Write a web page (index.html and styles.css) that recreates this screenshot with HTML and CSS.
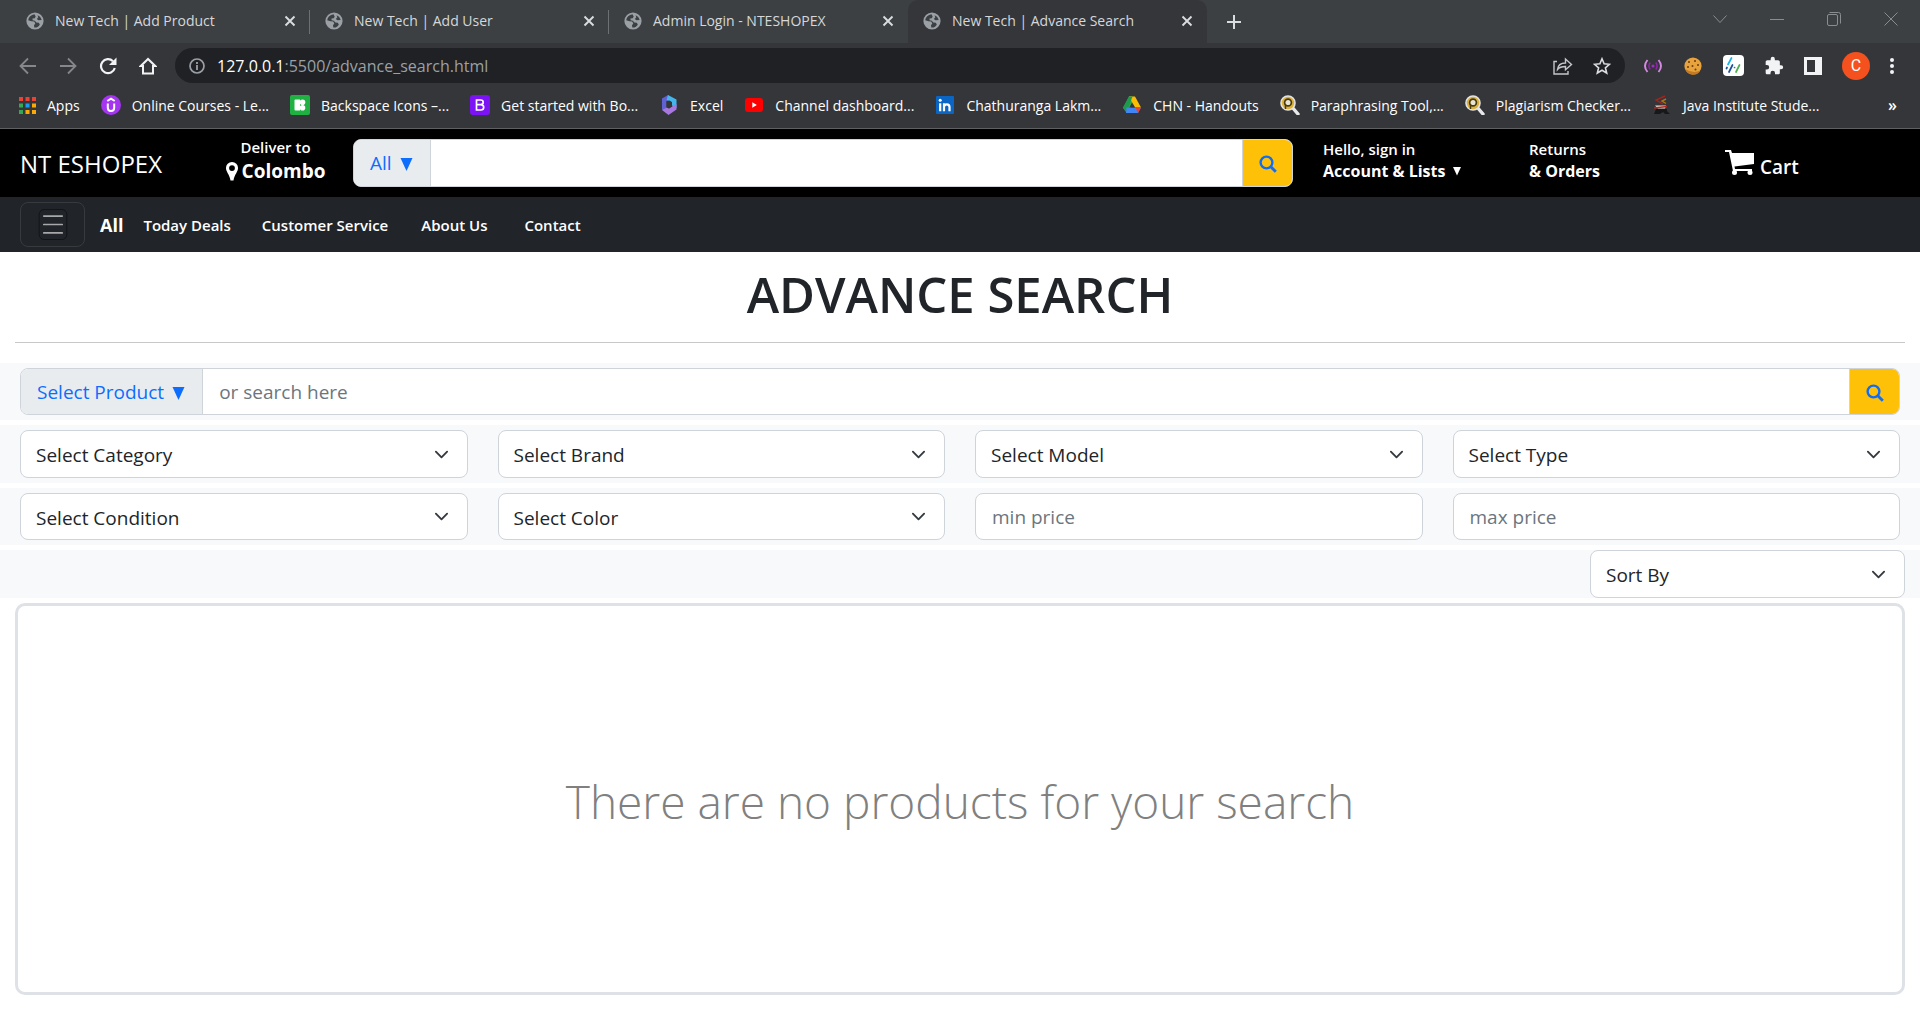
FILE: index.html
```html
<!DOCTYPE html>
<html lang="en">
<head>
<meta charset="utf-8">
<meta name="viewport" content="width=device-width, initial-scale=1">
<title>New Tech | Advance Search</title>
<link rel="stylesheet" href="styles.css">
</head>
<body>
<svg class="sprite" aria-hidden="true">
  <symbol id="globe" viewBox="0 0 18 18">
    <circle cx="9" cy="9" r="8.6" fill="#9aa0a6"/>
    <path d="M8.5 2.3C5 2.8 2.600 5.200 2.200 8.200L5.600 9.300 8.200 9.600 9.300 11.600 8 13.300 8.300 15.600C11 15.800 13 14.500 13.800 12.500L12.800 10.800 10.400 10.600 8.800 8.700 6.600 8.300 6.500 6.600 8.800 6.200 9.700 4.400Z" fill="#3c4043"/>
    <path d="M11.500 3.200L12.300 5.300 10.800 7.100 12.500 8.300 15.600 7.900C15.200 5.700 13.600 4 11.500 3.200Z" fill="#3c4043"/>
  </symbol>
  <symbol id="cross" viewBox="0 0 12 12"><path d="M1.500 1.500l9 9M10.500 1.500l-9 9" stroke="#dadce0" stroke-width="1.900" fill="none"/></symbol>
  <symbol id="lens" viewBox="0 0 20 20">
    <path d="M12 12l6 7" stroke="#e8e8e8" stroke-width="3.400" stroke-linecap="round"/>
    <circle cx="8" cy="8" r="7" fill="#dcb13a" stroke="#e4e4e4" stroke-width="1.600"/>
    <circle cx="8" cy="7.500" r="3.400" fill="#e8e4d4" stroke="#4a3a10" stroke-width="1.700"/>
    <path d="M5.500 9v5" stroke="#4a3a10" stroke-width="1.500"/>
  </symbol>
  <symbol id="search" viewBox="0 0 18 18"><circle cx="7.500" cy="7.500" r="5.900" fill="none" stroke="#0d6efd" stroke-width="2.400"/><path d="M11.800 11.800l5 5" stroke="#0d6efd" stroke-width="2.800"/></symbol>
</svg>

<div class="browser">
  <div class="tabs">
    <div class="tab"><svg class="i18"><use href="#globe"/></svg><span>New Tech | Add Product</span><button class="bare" aria-label="Close tab"><svg class="i12"><use href="#cross"/></svg></button></div>
    <div class="tab"><svg class="i18"><use href="#globe"/></svg><span>New Tech | Add User</span><button class="bare" aria-label="Close tab"><svg class="i12"><use href="#cross"/></svg></button></div>
    <div class="tab last"><svg class="i18"><use href="#globe"/></svg><span>Admin Login - NTESHOPEX</span><button class="bare" aria-label="Close tab"><svg class="i12"><use href="#cross"/></svg></button></div>
    <div class="tab active"><svg class="i18"><use href="#globe"/></svg><span>New Tech | Advance Search</span><button class="bare" aria-label="Close tab"><svg class="i12"><use href="#cross"/></svg></button></div>
    <button class="bare new-tab" aria-label="New tab"><svg width="16" height="16" viewBox="0 0 16 16"><path d="M8 1v14M1 8h14" stroke="#dadce0" stroke-width="2"/></svg></button>
    <div class="window-buttons">
      <button class="bare" aria-label="Search tabs"><svg width="14" height="14" viewBox="0 0 14 14"><path d="M.5 3.500L7 10.500l6.500-7" fill="none" stroke="#8a8d90"/></svg></button>
      <button class="bare" aria-label="Minimize"><svg width="14" height="14" viewBox="0 0 14 14"><path d="M0 7.500h14" stroke="#8a8d90"/></svg></button>
      <button class="bare" aria-label="Restore"><svg width="14" height="14" viewBox="0 0 14 14"><rect x=".5" y="2.500" width="10" height="11" rx="1.500" fill="none" stroke="#8a8d90"/><path d="M2.500.500h9q2 0 2 2v9" fill="none" stroke="#8a8d90"/></svg></button>
      <button class="bare" aria-label="Close window"><svg width="14" height="14" viewBox="0 0 14 14"><path d="M.5.500l13 13M13.500.500l-13 13" stroke="#8a8d90"/></svg></button>
    </div>
  </div>

  <div class="toolbar">
    <div class="nav-buttons">
      <button class="bare" aria-label="Back"><svg width="18" height="18" viewBox="0 0 18 18"><path d="M17 9H2M9 1.500L1.500 9 9 16.500" fill="none" stroke="#85878a" stroke-width="1.800"/></svg></button>
      <button class="bare" aria-label="Forward"><svg width="18" height="18" viewBox="0 0 18 18"><path d="M1 9h15M9 1.500L16.500 9 9 16.500" fill="none" stroke="#85878a" stroke-width="1.800"/></svg></button>
      <button class="bare" aria-label="Reload"><svg width="18" height="18" viewBox="0 0 18 18"><path d="M15.800 11A7 7 0 1 1 14 4.200" fill="none" stroke="#f1f3f4" stroke-width="2.200"/><path d="M17.500.500v7.500H10z" fill="#f1f3f4"/></svg></button>
      <button class="bare" aria-label="Home"><svg width="18" height="18" viewBox="0 0 18 18"><path d="M9 2L1.800 9H4v7.500h10V9h2.200z" fill="none" stroke="#f1f3f4" stroke-width="2"/></svg></button>
    </div>
    <div class="omnibox">
      <svg width="16" height="16" viewBox="0 0 16 16"><circle cx="8" cy="8" r="7" fill="none" stroke="#9aa0a6" stroke-width="1.700"/><path d="M8 7v5M8 4v2" stroke="#9aa0a6" stroke-width="1.800"/></svg>
      <span class="url">127.0.0.1<span class="path">:5500/advance_search.html</span></span>
      <button class="bare" aria-label="Share"><svg width="20" height="18" viewBox="0 0 20 18"><path d="M4 4.500H1v12.500h14v-3M4.500 12.500c.500-4.500 3.500-6.500 8-6.500V2l6 5.500-6 5.300V9.500c-3.500 0-6 .500-8 3z" fill="none" stroke="#c4c7c9" stroke-width="1.400"/></svg></button>
      <button class="bare" aria-label="Bookmark this page"><svg width="18" height="18" viewBox="0 0 18 18"><path d="M9 1.800l2.100 5 5.400.500-4.100 3.500 1.300 5.200L9 13.200 4.300 16l1.300-5.200L1.500 7.300l5.400-.500z" fill="none" stroke="#dadce0" stroke-width="1.600"/></svg></button>
    </div>
    <div class="extensions">
      <button class="bare" aria-label="Recorder"><svg width="20" height="16" viewBox="0 0 20 16" fill="none"><path d="M4.500 2Q-.500 8 4.500 14M15.500 2q5 6 0 12" stroke="#d58be0" stroke-width="1.900"/><path d="M7.200 4.500q-2.600 3.500 0 7M12.800 4.500q2.600 3.500 0 7" stroke="#8e24aa" stroke-width="1.600"/><circle cx="10" cy="8" r="1.600" fill="#a32cc4"/></svg></button>
      <button class="bare" aria-label="Cookies"><svg width="20" height="20" viewBox="0 0 20 20"><circle cx="10" cy="10" r="8.600" fill="#e8a33d"/><path d="M2 13a8.600 8.600 0 0 0 15.500 1.500Q10 18 2 13z" fill="#c47a22"/><g fill="#6b3b12"><circle cx="6" cy="6" r="1"/><circle cx="12" cy="5" r="1"/><circle cx="15" cy="9" r="1"/><circle cx="9.500" cy="10" r="1"/><circle cx="5" cy="11" r="1"/><circle cx="12.500" cy="13.500" r="1"/></g></svg></button>
      <button class="bare" aria-label="Similar sites"><svg width="21" height="21" viewBox="0 0 21 21"><rect width="21" height="21" rx="4" fill="#fff"/><g fill="none" stroke-linecap="round" stroke-width="1.700"><path d="M8.500 3L5 9.500" stroke="#19b5e8"/><path d="M9.500 10L6 17M4 12.500l-.5 1" stroke="#1b4f9c"/><path d="M16.500 10L13 17" stroke="#4caf50"/><path d="M11.500 12.500h.1" stroke="#3a7a5a"/></g></svg></button>
      <button class="bare" aria-label="Extensions"><svg width="20" height="20" viewBox="0 0 24 24"><path d="M20.500 11H19V7c0-1.100-.900-2-2-2h-4V3.500a2.500 2.500 0 0 0-5 0V5H4c-1.100 0-2 .900-2 2v3.800h1.500a2.700 2.700 0 0 1 0 5.400H2V20c0 1.100.900 2 2 2h3.800v-1.500a2.700 2.700 0 0 1 5.400 0V22H17c1.100 0 2-.900 2-2v-4h1.500a2.500 2.500 0 0 0 0-5z" fill="#f1f3f4"/></svg></button>
      <button class="bare" aria-label="Side panel"><svg width="18" height="18" viewBox="0 0 18 18"><path d="M0 0h18v18H0zM3 3v12h8V3z" fill="#f1f3f4" fill-rule="evenodd"/></svg></button>
      <button class="avatar" aria-label="Profile">C</button>
      <button class="bare" aria-label="Menu"><svg width="4" height="18" viewBox="0 0 4 18" fill="#f1f3f4"><circle cx="2" cy="3" r="2"/><circle cx="2" cy="9" r="2"/><circle cx="2" cy="15" r="2"/></svg></button>
    </div>
  </div>

  <nav class="bookmarks" aria-label="Bookmarks">
    <a href="#apps" class="apps"><svg width="17" height="17" viewBox="0 0 17 17"><path d="M0 0h4v4H0zM6.500 0h4v4h-4zM13 0h4v4h-4z" fill="#ea4335"/><path d="M0 6.500h4v4H0zM0 13h4v4H0z" fill="#34a853"/><path d="M6.500 6.500h4v4h-4z" fill="#1a9cf0"/><path d="M13 6.500h4v4h-4zM6.500 13h4v4h-4zM13 13h4v4h-4z" fill="#fbaa05"/></svg><span>Apps</span></a>
    <a href="#courses"><svg class="i20" viewBox="0 0 20 20"><circle cx="10" cy="10" r="10" fill="#a435f0"/><path d="M6.800 8.500v4.300q0 3.200 3.200 3.200t3.200-3.200V8.500M6.300 6L10 3.700 13.700 6" fill="none" stroke="#fff" stroke-width="2"/></svg><span>Online Courses - Le...</span></a>
    <a href="#icons"><svg class="i20" viewBox="0 0 20 20"><rect width="20" height="20" rx="2" fill="#1fb141"/><path d="M4.500 5.500q0-1 1-1H10v11H5.500q-1 0-1-1z" fill="#fff"/><circle cx="12.500" cy="7.200" r="2.800" fill="#fff"/><circle cx="12.500" cy="12.800" r="2.800" fill="#fff"/></svg><span>Backspace Icons –...</span></a>
    <a href="#bootstrap"><svg class="i20" viewBox="0 0 20 20"><rect width="20" height="20" rx="3" fill="#7b13f5"/><path d="M6.500 5h4.200q2.500 0 2.500 2.300T10.700 9.600H6.500M10.700 9.600q3 0 3 2.700T10.700 15H6.500V4.200" fill="none" stroke="#fff" stroke-width="1.700"/></svg><span>Get started with Bo...</span></a>
    <a href="#excel"><svg class="i20" viewBox="0 0 20 20"><path d="M9 0L3 3.500v11L9 18l-1.500-5V6L13 4z" fill="#5f62d0"/><path d="M9 0l8.500 4.500V13L13 10.500V7L7.500 5z" fill="#45b5ea"/><path d="M17.500 9v5.500L9.500 20 3 15l5-2.500 2 1 3-2z" fill="#a878e0"/><path d="M7.500 6.500l3-1L13 7.500v4l-3 2-2.500-1.500z" fill="#35363a"/></svg><span>Excel</span></a>
    <a href="#youtube"><svg class="i20" viewBox="0 0 20 20"><rect x="1" y="3" width="18" height="14" rx="3" fill="#f00"/><path d="M8.300 7.300v5.400L12.800 10z" fill="#fff"/></svg><span>Channel dashboard...</span></a>
    <a href="#linkedin"><svg class="i20" viewBox="0 0 20 20"><rect x="1" y="1" width="18" height="18" rx="1" fill="#0a66c2"/><path d="M5.200 8.300v8M9 16.300v-8M9 12q0-2.700 2.800-2.700 2.700 0 2.700 2.700v4.300" fill="none" stroke="#fff" stroke-width="2.200"/><circle cx="5.200" cy="5.200" r="1.500" fill="#fff"/></svg><span>Chathuranga Lakm...</span></a>
    <a href="#drive"><svg class="i20" viewBox="0 0 20 20"><path d="M7 1.500h3L13 6.500 5.500 18 1 13z" fill="#34a853"/><path d="M7 1.500h6l6 11h-6z" fill="#fbbc04"/><path d="M7 1.500h3.500L4.500 18 1 12.500z" fill="#1e9a4c"/><path d="M4.500 12.500H19L16 18H4z" fill="#4285f4"/><path d="M13.500 12.500H19L16 18z" fill="#ea4335"/><path d="M10 7.500l2.700 5H7.300z" fill="#35363a"/></svg><span>CHN - Handouts</span></a>
    <a href="#paraphrase"><svg class="i20"><use href="#lens"/></svg><span>Paraphrasing Tool,...</span></a>
    <a href="#plagiarism"><svg class="i20"><use href="#lens"/></svg><span>Plagiarism Checker...</span></a>
    <a href="#java"><svg class="i20" viewBox="0 0 20 20"><path d="M13 1L4 5l7 4" fill="none" stroke="#a3241c" stroke-width="1.400"/><path d="M14 4l-4 2 4 2.500" fill="none" stroke="#a8741c" stroke-width="1.400"/><path d="M3 10.500h11l-1 3H6z" fill="#e8d8cc"/><path d="M2 13l13-1.500" stroke="#b3261e" stroke-width="1.300"/><path d="M4 14h11v2l3 3h-5l-2-2-3 2H2z" fill="#17181a"/></svg><span>Java Institute Stude...</span></a>
    <button class="bare more" aria-label="More bookmarks">»</button>
  </nav>
</div>

<header class="shop">
  <a class="brand" href="#home">NT ESHOPEX</a>
  <div class="deliver">
    <span>Deliver to</span>
    <strong><svg width="12" height="19" viewBox="0 0 12 19"><path d="M6 0a6 6 0 0 1 6 6.200C12 10 8.500 12 7.500 18.500h-3C3.500 12 0 10 0 6.200A6 6 0 0 1 6 0zm0 3.200a2.900 2.900 0 1 0 0 5.800 2.900 2.900 0 0 0 0-5.800z" fill="#fff"/></svg>Colombo</strong>
  </div>
  <form class="group">
    <button type="button" class="addon">All <svg class="tri" viewBox="0 0 12 14"><path d="M0 0h12L6 13z" fill="#0d6efd"/></svg></button>
    <input type="text" aria-label="Search the shop">
    <button type="button" class="go" aria-label="Search"><svg class="i18"><use href="#search"/></svg></button>
  </form>
  <a class="two-line account" href="#account"><span>Hello, sign in</span><strong>Account &amp; Lists <svg width="8" height="9" viewBox="0 0 8 9"><path d="M0 0h8L4 8.500z" fill="#fff"/></svg></strong></a>
  <a class="two-line" href="#orders"><span>Returns</span><strong>&amp; Orders</strong></a>
  <a class="cart" href="#cart"><svg width="30" height="26" viewBox="0 0 30 26"><path d="M0 0h6l1 3h22v11L9.500 16.500l.5 2.500H27v2H8L4 2H0z" fill="#fff"/><circle cx="9.500" cy="22.500" r="2.500" fill="#fff"/><circle cx="25" cy="22.500" r="2.500" fill="#fff"/></svg><span>Cart</span></a>
</header>

<nav class="menu" aria-label="Shop">
  <button class="toggler" aria-label="Open menu"><svg width="34" height="37" viewBox="0 0 34 37"><rect x=".5" y=".5" width="33" height="36" rx="6" fill="none" stroke="#101214"/><path d="M6 8.500h22M6 18.500h22M6 28.500h22" stroke="#a6a8a9" stroke-width="2" stroke-linecap="round"/></svg></button>
  <a class="all" href="#all">All</a>
  <a class="deals" href="#deals">Today Deals</a>
  <a class="service" href="#service">Customer Service</a>
  <a class="about" href="#about">About Us</a>
  <a href="#contact">Contact</a>
</nav>

<main>
  <h1>ADVANCE SEARCH</h1>
  <hr>
  <form class="filters">
    <div class="row">
      <div class="group">
        <button type="button" class="addon">Select Product <svg class="tri" viewBox="0 0 12 14"><path d="M0 0h12L6 13z" fill="#0d6efd"/></svg></button>
        <input type="text" placeholder="or search here" aria-label="Search products">
        <button type="button" class="go" aria-label="Search"><svg class="i18"><use href="#search"/></svg></button>
      </div>
    </div>
    <div class="row four">
      <select aria-label="Category"><option>Select Category</option></select>
      <select aria-label="Brand"><option>Select Brand</option></select>
      <select aria-label="Model"><option>Select Model</option></select>
      <select aria-label="Type"><option>Select Type</option></select>
    </div>
    <div class="row four short">
      <select aria-label="Condition"><option>Select Condition</option></select>
      <select aria-label="Color"><option>Select Color</option></select>
      <input class="field" type="text" placeholder="min price" aria-label="Minimum price">
      <input class="field" type="text" placeholder="max price" aria-label="Maximum price">
    </div>
    <div class="row sort">
      <select aria-label="Sort by"><option>Sort By</option></select>
    </div>
  </form>
  <section class="results"><p>There are no products for your search</p></section>
</main>
</body>
</html>
```
FILE: styles.css
```css
* { box-sizing: border-box; }

body {
  margin: 0;
  min-height: 100vh;
  display: flex;
  flex-direction: column;
  background: #fff;
  color: #212529;
  font-family: "Open Sans", "Noto Sans", sans-serif;
  font-size: 19px;
}

a { color: inherit; text-decoration: none; }
button, input, select { font: inherit; color: inherit; }
svg { flex: none; display: block; }

.sprite { position: absolute; width: 0; height: 0; }
.i12 { width: 12px; height: 12px; }
.i18 { width: 18px; height: 18px; }
.i20 { width: 20px; height: 20px; }
.bare { display: flex; padding: 0; border: 0; background: none; }

/* browser chrome */
.browser {
  background: #35363a;
  border-bottom: 1px solid #5f6062;
  color: #fff;
  font-size: 14px;
}

.tabs {
  display: flex;
  height: 43px;
  padding-left: 11px;
  background: #3c4043;
  color: #d5d7da;
}
.tab {
  display: flex;
  align-items: center;
  gap: 11px;
  flex: 0 1 299px;
  padding: 0 14px 2px 15px;
  white-space: nowrap;
  background: linear-gradient(#6d7073, #6d7073) right 10px / 1px 24px no-repeat;
}
.tab span { flex: 1; overflow: hidden; }
.tab.last { background: none; }
.tab.active { background: #35363a; border-radius: 10px 10px 0 0; }
.new-tab { align-items: center; padding-left: 19px; }
.window-buttons { display: flex; gap: 43px; margin-left: auto; padding: 12px 22px 0 0; align-items: flex-start; }

.toolbar { display: flex; align-items: center; height: 45px; gap: 18px; padding: 0 26px 0 19px; }
.nav-buttons { display: flex; gap: 22px; }
.omnibox {
  display: flex;
  align-items: center;
  flex: 1;
  height: 35px;
  padding: 0 14px;
  gap: 20px;
  border-radius: 18px;
  background: #202124;
}
.url { flex: 1; margin-left: -8px; font-size: 16px; }
.path { color: #9aa0a6; }
.extensions { display: flex; align-items: center; gap: 20px; }
.avatar {
  width: 28px;
  height: 28px;
  padding: 0;
  border: 0;
  border-radius: 50%;
  background: #f4511e;
  color: #fff;
  font: 16px Roboto, sans-serif;
}

.bookmarks { display: flex; align-items: center; gap: 21px; height: 40px; padding: 0 23px 6px 19px; white-space: nowrap; }
.bookmarks a { display: flex; align-items: center; gap: 11px; }
.more { margin-left: auto; font-size: 16px; font-weight: 600; }

/* shop header */
.shop {
  display: grid;
  grid-template-columns: 204px 129px minmax(0, 1fr) 236px 196px 175px;
  align-items: center;
  height: 68px;
  padding: 0 20px;
  background: #000;
  color: #fff;
  white-space: nowrap;
}
.brand { font-size: 24px; }
.deliver { display: grid; width: 103px; padding-bottom: 8px; justify-items: center; font-size: 15px; font-weight: 600; line-height: 24px; }
.deliver strong { display: flex; align-items: center; gap: 4px; font-size: 19px; font-weight: 700; }
.two-line { display: grid; padding-bottom: 6px; font-size: 15px; font-weight: 600; line-height: 22px; }
.two-line strong { display: flex; align-items: center; gap: 8px; font-size: 16px; font-weight: 700; }
.account { padding-left: 30px; }
.cart { display: flex; align-items: center; gap: 5px; font-size: 19px; font-weight: 600; }
.cart span { padding-top: 8px; }

.group { display: flex; height: 48px; border: 1px solid #ced4da; border-radius: 8px; background: #fff; overflow: hidden; }
.group input { flex: 1; min-width: 0; padding: 0 16px; border: 0; outline: 0; background: #fff; color: #212529; }
.addon {
  display: flex;
  align-items: center;
  gap: 8px;
  padding: 0 17px 0 16px;
  border: 0;
  border-right: 1px solid #ced4da;
  background: #e9ecef;
  color: #0d6efd;
}
.tri { width: 13px; height: 14px; margin-top: 4px; }
.go { display: grid; place-items: center; width: 50px; padding: 2px 0 0; border: 0; border-left: 1px solid #ced4da; background: #ffc107; }
::placeholder { color: #6c757d; opacity: 1; }

.menu {
  display: flex;
  align-items: center;
  height: 55px;
  padding: 0 20px;
  background: #212529;
  color: #fff;
  font-size: 15px;
  font-weight: 600;
  white-space: nowrap;
}
.toggler { display: grid; place-items: center; width: 65px; height: 45px; padding: 0; border: 1px solid #373b3e; border-radius: 8px; background: none; margin-right: 15px; }
.toggler svg { height: 31px; }
.all { margin-right: 20px; font-size: 18px; font-weight: 700; }
.deals { margin-right: 31px; }
.service { margin-right: 33px; }
.about { margin-right: 37px; }

/* search page */
main { display: flex; flex-direction: column; flex: 1; padding-bottom: 25px; }
h1 { margin: 12px 0 18px; font-size: 49px; font-weight: 600; line-height: 60px; text-align: center; }
hr { margin: 0 15px 20px; width: auto; border: 0; border-top: 1px solid #c7c8c9; align-self: stretch; }
.filters { display: grid; gap: 5px; }
.row { padding: 5px 20px; background: #f8f9fa; }
.row .group { height: 47px; }
.four { display: grid; grid-template-columns: repeat(4, minmax(0, 1fr)); gap: 30px; }
.sort { display: flex; justify-content: flex-end; padding: 0 15px; }
.sort select { width: 315px; }

select, .field {
  width: 100%;
  height: 48px;
  padding: 0 16px;
  border: 1px solid #ced4da;
  border-radius: 8px;
  background: #fff;
  color: #212529;
}
.short select, .field { height: 47px; }
select {
  padding: 2px 15px 0;
  appearance: none;
  background: #fff url("data:image/svg+xml,%3Csvg xmlns='http://www.w3.org/2000/svg' viewBox='0 0 16 16'%3E%3Cpath fill='none' stroke='%23343a40' stroke-linecap='round' stroke-linejoin='round' stroke-width='2' d='m2 5 6 6 6-6'/%3E%3C/svg%3E") right 18px center / 15px 15px no-repeat;
}

.results {
  display: grid;
  place-items: center;
  flex: 1;
  margin: 5px 15px 0;
  padding-top: 4px;
  min-height: 200px;
  border: 3px solid #dee2e6;
  border-radius: 10px;
}
.results p { margin: 0; color: #808080; font-size: 46px; font-weight: 300; }
```
